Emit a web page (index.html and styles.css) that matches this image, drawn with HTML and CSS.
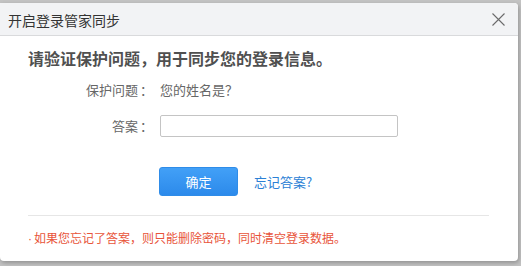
FILE: index.html
```html
<!DOCTYPE html>
<html lang="zh-CN">
<head>
<meta charset="utf-8">
<title>开启登录管家同步</title>
<link rel="stylesheet" href="styles.css">
</head>
<body>
<div class="dialog">
  <div class="dialog-header">
    <span class="dialog-title">开启登录管家同步</span>
    <button class="close" aria-label="关闭">
      <svg width="13" height="13" viewBox="0 0 13 13"><path d="M0.5 0.5 L12.5 12.5 M12.5 0.5 L0.5 12.5" stroke="#6b6b6b" stroke-width="1.1" fill="none"/></svg>
    </button>
  </div>
  <div class="dialog-body">
    <h1 class="heading">请验证保护问题，用于同步您的登录信息。</h1>
    <div class="form">
      <div class="label">保护问题<span class="colon">：</span></div>
      <div class="value question">您的姓名是？</div>
      <div class="label label-answer">答案<span class="colon">：</span></div>
      <div class="value"><input class="answer" type="text"></div>
    </div>
    <div class="actions">
      <button class="btn-primary">确定</button>
      <a class="forgot" href="#">忘记答案?</a>
    </div>
    <div class="divider"></div>
    <p class="warning"><span class="dot">·</span>如果您忘记了答案，则只能删除密码，同时清空登录数据。</p>
  </div>
</div>
</body>
</html>
```

FILE: styles.css
```css
html, body {
  margin: 0;
  padding: 0;
}
body {
  width: 521px;
  height: 266px;
  overflow: hidden;
  background: #c3c3c3;
  font-family: "Noto Sans CJK SC", "Noto Sans", sans-serif;
  padding-top: 3px;
  box-sizing: border-box;
}
.dialog {
  width: 518px;
  height: 258px;
  background: #fff;
  border-radius: 0 4px 4px 4px;
  box-shadow: 1px 2px 4px rgba(0,0,0,0.25);
  overflow: hidden;
}
.dialog-header {
  height: 32px;
  background: #f2f3f5;
  border-bottom: 1px solid #d9dadc;
  display: flex;
  align-items: center;
  justify-content: space-between;
  padding: 0 13px 0 8px;
}
.dialog-title {
  font-size: 14px;
  color: #333;
  line-height: 20px;
  padding-top: 1px;
}
.close {
  border: 0;
  background: none;
  padding: 0;
  width: 13px;
  height: 13px;
  display: flex;
  margin-top: 1px;
}
.dialog-body {
  padding: 12px 29px 0 28px;
}
.heading {
  margin: 0;
  font-size: 16px;
  line-height: 20px;
  font-weight: bold;
  color: #505050;
}
.form {
  display: grid;
  grid-template-columns: 125px 1fr;
  column-gap: 7px;
  row-gap: 14px;
  margin-top: 11px;
  font-size: 13px;
  color: #666;
  align-items: center;
}
.label {
  text-align: right;
  line-height: 22px;
}
.colon {
  display: inline-block;
  width: 13px;
  text-align: center;
  margin-left: 2px;
}
.question {
  line-height: 22px;
}
.answer {
  display: block;
  width: 238px;
  height: 22px;
  box-sizing: border-box;
  border: 1px solid #c4c4c4;
  border-radius: 2px;
  margin: 0;
  padding: 0 4px;
  font-size: 13px;
  outline: none;
}
.actions {
  display: flex;
  align-items: center;
  gap: 16px;
  margin-top: 30px;
  padding-left: 131px;
}
.btn-primary {
  width: 79px;
  height: 29px;
  border: 1px solid #2f8ce8;
  border-radius: 3px;
  background: linear-gradient(#42a0f7, #2c8aeb);
  color: #fff;
  font-family: inherit;
  font-size: 13px;
  padding: 0;
  line-height: 27px;
}
.forgot {
  color: #2a80d5;
  font-size: 13px;
  text-decoration: none;
}
.divider {
  height: 1px;
  background: #e6e6e6;
  margin-top: 19px;
}
.warning {
  margin: 14px 0 0;
  font-size: 12px;
  line-height: 16px;
  color: #e8543a;
}
.dot {
  font-family: "Liberation Sans", sans-serif;
  margin-right: 2px;
}
```
